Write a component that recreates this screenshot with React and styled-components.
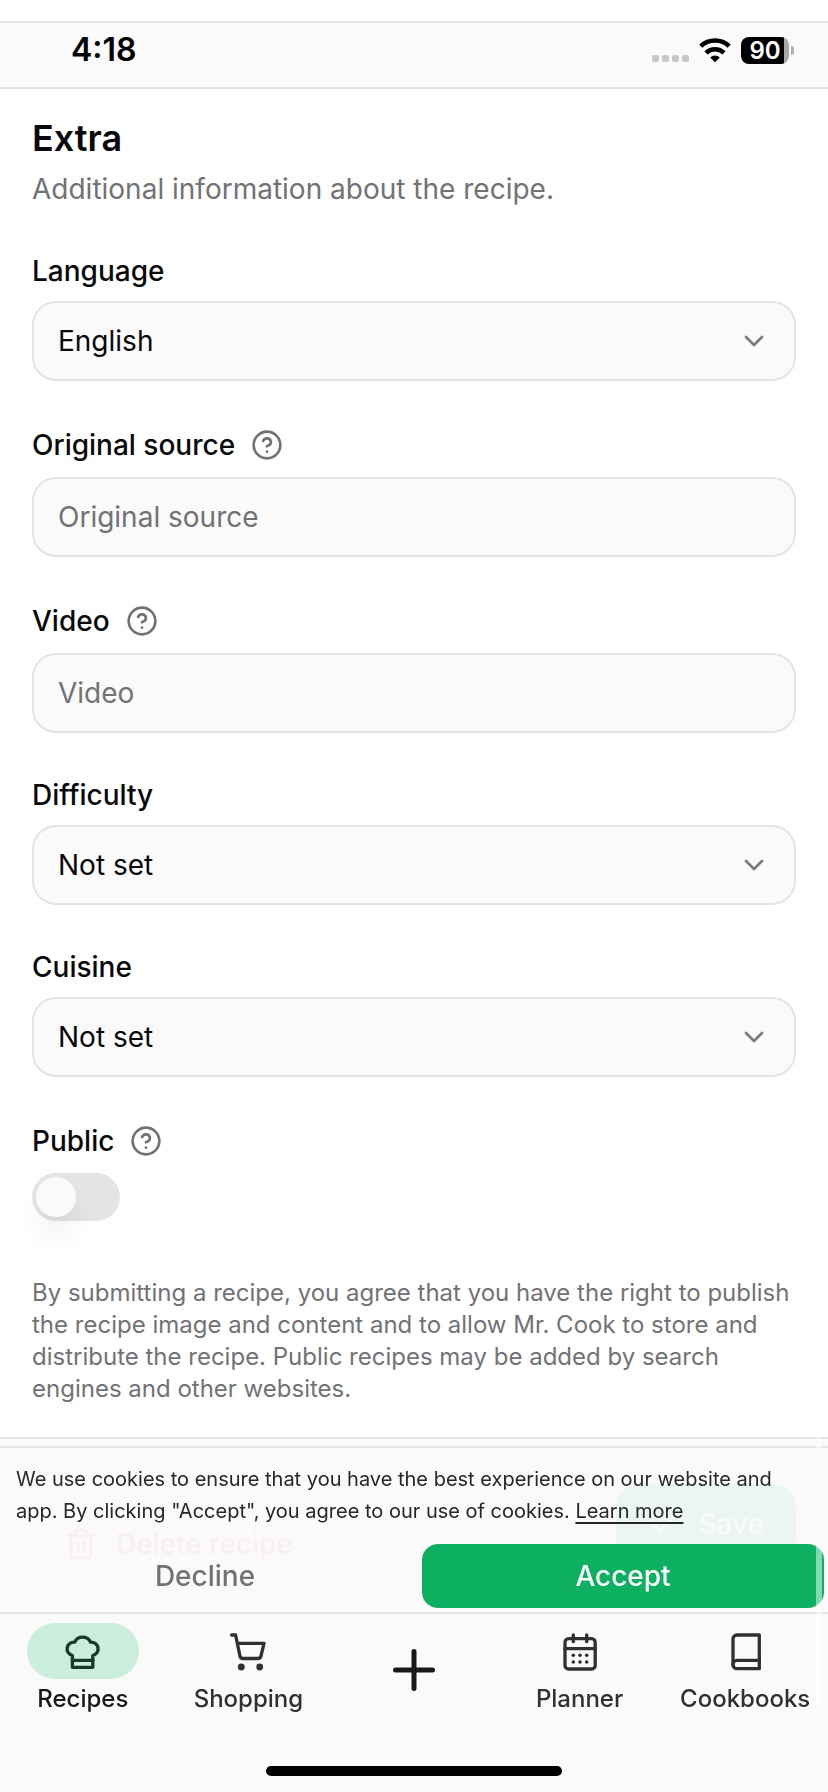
import React from "react";
import styled, { createGlobalStyle } from "styled-components";
import { ChevronDown, CircleHelp, Trash2, Check } from "lucide-react";

const GlobalStyle = createGlobalStyle`
  *, *::before, *::after { box-sizing: border-box; }
  body {
    margin: 0;
    background: #ffffff;
    color: #09090b;
    font-family: Inter, "Liberation Sans", sans-serif;
    font-size: 28px;
    line-height: 40px;
  }
  button, input, select { font: inherit; color: inherit; }
`;

const StatusBar = styled.header`
  display: flex;
  align-items: flex-start;
  justify-content: space-between;
  height: 68px;
  margin-top: 21px;
  padding: 7px 34px 0 71px;
  background: #fafafa;
  border-top: 2px solid #e4e4e5;
  border-bottom: 2px solid #e4e4e5;
`;

const Clock = styled.time`
  font-size: 32px;
  font-weight: 600;
  color: #000000;
`;

const StatusIcons = styled.div`
  display: flex;
  align-items: center;
  gap: 10px;
  height: 40px;
`;

const SignalDots = styled.div`
  display: flex;
  gap: 3px;
  padding-top: 16px;

  span {
    width: 7px;
    height: 7px;
    border-radius: 2px;
    background: #c8c8c8;
  }
`;

const Battery = styled.div`
  display: flex;
  align-items: center;
  gap: 2px;

  &::after {
    content: "";
    width: 3px;
    height: 9px;
    border-radius: 0 4px 4px 0;
    background: #b0b0b0;
  }
`;

const BatteryLevel = styled.div`
  width: 48px;
  height: 27px;
  border-radius: 8px;
  background: linear-gradient(to right, #000000 43px, #a9a9a9 43px);
  color: #ffffff;
  font-size: 24px;
  font-weight: 600;
  line-height: 27px;
  text-align: center;
`;

const Form = styled.form`
  display: flex;
  flex-direction: column;
`;

const Section = styled.section`
  display: flex;
  flex-direction: column;
  gap: 42px;
  padding: 25px 32px 32px;
`;

const Title = styled.h1`
  margin: 0 0 7px;
  font-size: 36px;
  font-weight: 600;
  line-height: 48px;
`;

const Subtitle = styled.p`
  margin: 0;
  color: #727276;
`;

const Field = styled.div`
  display: flex;
  flex-direction: column;
  align-items: flex-start;
  gap: 10px;
`;

const LabelRow = styled.div`
  display: flex;
  align-items: center;
  gap: 16px;
  height: ${(p) => (p.$tall ? "44px" : "40px")};
`;

const Label = styled.label`
  font-weight: 500;
`;

const HelpButton = styled.button`
  display: flex;
  padding: 0;
  border: 0;
  background: none;
  color: #727276;
`;

const TextInput = styled.input`
  width: 100%;
  height: 80px;
  padding: 0 24px;
  border: 2px solid #e4e4e5;
  border-radius: 24px;
  background: #fafafa;

  &::placeholder {
    color: #727276;
    opacity: 1;
  }
`;

const SelectShell = styled.div`
  position: relative;
  width: 100%;

  svg {
    position: absolute;
    top: 24px;
    right: 26px;
    color: #7b7b7d;
    pointer-events: none;
  }
`;

const Select = styled.select`
  display: block;
  width: 100%;
  height: 80px;
  padding: 0 72px 0 24px;
  border: 2px solid #e4e4e5;
  border-radius: 24px;
  background: #fafafa;
  appearance: none;
`;

const Switch = styled.input`
  appearance: none;
  width: 88px;
  height: 48px;
  margin: 0;
  padding: 4px;
  border-radius: 24px;
  background: #e4e4e7;

  &::before {
    content: "";
    display: block;
    width: 40px;
    height: 40px;
    border-radius: 50%;
    background: #fafafa;
    box-shadow: 0 20px 30px -6px rgba(0, 0, 0, 0.1), 0 8px 12px -8px rgba(0, 0, 0, 0.06);
  }

  &:checked {
    background: #0db060;
  }

  &:checked::before {
    margin-left: 40px;
  }
`;

const Terms = styled.p`
  margin: 14px 0 0;
  color: #727276;
  font-size: 24px;
  line-height: 32px;
`;

const FormActions = styled.div`
  display: flex;
  justify-content: space-between;
  height: 148px;
  padding: 45px 32px 0;
  background: #fafafa;
  border-top: 2px solid #e4e4e5;
`;

const ActionButton = styled.button`
  display: flex;
  align-items: center;
  justify-content: center;
  gap: 18px;
  height: 80px;
  margin-top: ${(p) => (p.$primary ? "0" : "20px")};
  padding: 0 32px;
  border: 0;
  border-radius: 24px;
  background: ${(p) => (p.$primary ? "#0db060" : "transparent")};
  color: ${(p) => (p.$primary ? "#ffffff" : "#ef4444")};
  font-weight: 500;
`;

const BottomDock = styled.div`
  position: fixed;
  right: 0;
  bottom: 0;
  left: 0;
`;

const CookieBanner = styled.aside`
  padding: 15px 4px 4px;
  border-top: 2px solid #e4e4e5;
  background: rgba(250, 250, 250, 0.94);
`;

const CookieText = styled.p`
  margin: 0 0 17px;
  padding: 0 12px;
  color: #27272a;
  font-size: 20px;
  line-height: 32px;
`;

const LearnMore = styled.a`
  color: inherit;
  text-decoration: underline 2px;
  text-underline-offset: 4px;
`;

const CookieButtons = styled.div`
  display: grid;
  grid-template-columns: 1fr 1fr;
  gap: 16px;
`;

const CookieButton = styled.button`
  height: 64px;
  padding: 0;
  border: 0;
  border-radius: 16px;
  background: ${(p) => (p.$primary ? "#0db060" : "transparent")};
  color: ${(p) => (p.$primary ? "#ffffff" : "#727276")};
  font-weight: 500;
`;

const NavBar = styled.nav`
  display: grid;
  grid-template-columns: repeat(5, 1fr);
  align-items: start;
  height: 180px;
  padding-top: 9px;
  border-top: 2px solid #e4e4e5;
  background: #fafafa;
`;

const NavItem = styled.a`
  display: flex;
  flex-direction: column;
  align-items: center;
  gap: 4px;
  color: ${(p) => (p.$active ? "#18181b" : "#303032")};
  font-size: 24px;
  font-weight: 500;
  line-height: 32px;
  text-decoration: none;
`;

const NavIcon = styled.span`
  display: flex;
  align-items: center;
  justify-content: center;
  width: 112px;
  height: 56px;
  border-radius: 28px;
  background: ${(p) => (p.$active ? "#caeddc" : "transparent")};
  color: ${(p) => (p.$active ? "#18392a" : "#303032")};
`;

const AddButton = styled.button`
  display: flex;
  align-items: center;
  justify-content: center;
  height: 94px;
  padding: 0;
  border: 0;
  background: none;
  color: #18181b;
`;

const HomeIndicator = styled.div`
  position: absolute;
  bottom: 16px;
  left: 50%;
  width: 296px;
  height: 10px;
  margin-left: -148px;
  border-radius: 5px;
  background: #000000;
`;

const ScrollThumb = styled.div`
  position: absolute;
  right: 6px;
  bottom: 82px;
  width: 6px;
  height: 273px;
  border-radius: 3px;
  background: rgba(255, 255, 255, 0.5);
`;

const WifiIcon = () => (
  <svg width="32" height="26" viewBox="0 0 32 26" fill="none" stroke="#000000" strokeWidth="4.6" aria-hidden="true">
    <path d="M1.8 9.2a20.5 20.5 0 0 1 28.4 0" />
    <path d="M7 15.8a13 13 0 0 1 18 0" />
    <path d="M16 25.2l-4.8-4.8a7 7 0 0 1 9.6 0z" fill="#000000" stroke="none" />
  </svg>
);

const LineIcon = ({ children }) => (
  <svg
    width="40"
    height="40"
    viewBox="0 0 40 40"
    fill="none"
    stroke="currentColor"
    strokeWidth="3.3"
    strokeLinecap="round"
    strokeLinejoin="round"
    aria-hidden="true"
  >
    {children}
  </svg>
);

const ChefHatIcon = () => (
  <LineIcon>
    <path d="M9.4 36.3V24.5A6.75 6.75 0 0 1 11.6 11.2a8.9 8.9 0 0 1 16 0a6.75 6.75 0 0 1 2.2 13.3v11.8z" />
    <path d="M9.4 29.3h20.4" />
  </LineIcon>
);

const CartIcon = () => (
  <LineIcon>
    <path d="M3.6 4h4l4.3 20.8a3.3 3.3 0 0 0 3.2 2.7h14.7a3.3 3.3 0 0 0 3.2-2.6l3-12.6H9.3" />
    <circle cx="13.3" cy="36" r="3.4" fill="currentColor" stroke="none" />
    <circle cx="31.7" cy="36" r="3.4" fill="currentColor" stroke="none" />
  </LineIcon>
);

const CalendarIcon = () => (
  <LineIcon>
    <rect x="5" y="7.6" width="30.2" height="30.4" rx="3.6" />
    <path d="M5 17.7h30.2M13.3 4v6.7M26.7 4v6.7" />
    <g fill="currentColor" stroke="none">
      {[13.3, 20, 26.7].map((x) =>
        [24.3, 31].map((y) => <circle key={`${x}-${y}`} cx={x} cy={y} r="1.8" />)
      )}
    </g>
  </LineIcon>
);

const BookIcon = () => (
  <LineIcon>
    <path d="M34.3 37.7H12a4 4 0 0 1-4-4V8a4 4 0 0 1 4-4h22.3z" />
    <path d="M8 33.7a4 4.3 0 0 1 4-4.3h22.3" />
  </LineIcon>
);

const PlusIcon = () => (
  <svg width="44" height="44" viewBox="0 0 44 44" fill="none" stroke="currentColor" strokeWidth="5" strokeLinecap="round" aria-hidden="true">
    <path d="M22 3.5v37M3.5 22h37" />
  </svg>
);

const FieldLabel = ({ id, children, help }) => (
  <LabelRow $tall={help}>
    <Label htmlFor={id}>{children}</Label>
    {help && (
      <HelpButton type="button" aria-label={`About ${children}`}>
        <CircleHelp size={32} strokeWidth={2} />
      </HelpButton>
    )}
  </LabelRow>
);

const SelectField = ({ id, label, value }) => (
  <Field>
    <FieldLabel id={id}>{label}</FieldLabel>
    <SelectShell>
      <Select id={id} defaultValue={value}>
        <option>{value}</option>
      </Select>
      <ChevronDown size={32} />
    </SelectShell>
  </Field>
);

const TextField = ({ id, label }) => (
  <Field>
    <FieldLabel id={id} help>{label}</FieldLabel>
    <TextInput id={id} type="text" placeholder={label} />
  </Field>
);

const navItems = [
  { label: "Recipes", Icon: ChefHatIcon, active: true },
  { label: "Shopping", Icon: CartIcon },
  null,
  { label: "Planner", Icon: CalendarIcon },
  { label: "Cookbooks", Icon: BookIcon },
];

export default function App() {
  return (
    <>
      <GlobalStyle />
      <StatusBar>
        <Clock>4:18</Clock>
        <StatusIcons>
          <SignalDots>
            <span />
            <span />
            <span />
            <span />
          </SignalDots>
          <WifiIcon />
          <Battery>
            <BatteryLevel>90</BatteryLevel>
          </Battery>
        </StatusIcons>
      </StatusBar>
      <Form onSubmit={(e) => e.preventDefault()}>
        <Section>
          <div>
            <Title>Extra</Title>
            <Subtitle>Additional information about the recipe.</Subtitle>
          </div>
          <SelectField id="language" label="Language" value="English" />
          <TextField id="source" label="Original source" />
          <TextField id="video" label="Video" />
          <SelectField id="difficulty" label="Difficulty" value="Not set" />
          <SelectField id="cuisine" label="Cuisine" value="Not set" />
          <Field>
            <FieldLabel id="public" help>Public</FieldLabel>
            <Switch id="public" type="checkbox" role="switch" />
          </Field>
          <Terms>
            By submitting a recipe, you agree that you have the right to publish the recipe image and
            content and to allow Mr. Cook to store and distribute the recipe. Public recipes may be
            added by search engines and other websites.
          </Terms>
        </Section>
        <FormActions>
          <ActionButton type="button">
            <Trash2 size={34} />
            Delete recipe
          </ActionButton>
          <ActionButton type="submit" $primary>
            <Check size={32} />
            Save
          </ActionButton>
        </FormActions>
      </Form>
      <BottomDock>
        <CookieBanner>
          <CookieText>
            We use cookies to ensure that you have the best experience on our website and app. By
            clicking "Accept", you agree to our use of cookies.{" "}
            <LearnMore href="#cookies">Learn more</LearnMore>
          </CookieText>
          <CookieButtons>
            <CookieButton type="button">Decline</CookieButton>
            <CookieButton type="button" $primary>Accept</CookieButton>
          </CookieButtons>
        </CookieBanner>
        <NavBar>
          {navItems.map((item) =>
            item ? (
              <NavItem key={item.label} href={`#${item.label.toLowerCase()}`} $active={item.active}>
                <NavIcon $active={item.active}>
                  <item.Icon />
                </NavIcon>
                {item.label}
              </NavItem>
            ) : (
              <AddButton key="add" type="button" aria-label="Add recipe">
                <PlusIcon />
              </AddButton>
            )
          )}
        </NavBar>
        <HomeIndicator />
        <ScrollThumb />
      </BottomDock>
    </>
  );
}
